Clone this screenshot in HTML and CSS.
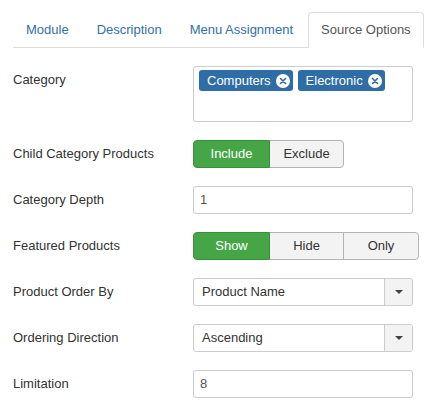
FILE: index.html
```html
<!DOCTYPE html>
<html>
<head>
<meta charset="utf-8">
<link rel="stylesheet" href="styles.css">
</head>
<body>
<div class="page">
  <ul class="tabs">
    <li><a>Module</a></li>
    <li><a>Description</a></li>
    <li><a>Menu Assignment</a></li>
    <li class="active"><a>Source Options</a></li>
  </ul>
  <div class="form">
    <div class="row">
      <div class="label">Category</div>
      <div class="controls">
        <div class="tagbox">
          <span class="tag">Computers<span class="x"><svg width="14" height="14" viewBox="0 0 14 14"><circle cx="7" cy="7" r="7" fill="#fff"/><path d="M4.5 4.5L9.5 9.5M9.5 4.5L4.5 9.5" stroke="#2f6da6" stroke-width="1.6" stroke-linecap="round"/></svg></span></span>
          <span class="tag">Electronic<span class="x"><svg width="14" height="14" viewBox="0 0 14 14"><circle cx="7" cy="7" r="7" fill="#fff"/><path d="M4.5 4.5L9.5 9.5M9.5 4.5L4.5 9.5" stroke="#2f6da6" stroke-width="1.6" stroke-linecap="round"/></svg></span></span>
        </div>
      </div>
    </div>
    <div class="row">
      <div class="label">Child Category Products</div>
      <div class="controls">
        <div class="btn-group">
          <span class="btn on w76">Include</span>
          <span class="btn w74">Exclude</span>
        </div>
      </div>
    </div>
    <div class="row">
      <div class="label">Category Depth</div>
      <div class="controls"><div class="input">1</div></div>
    </div>
    <div class="row">
      <div class="label">Featured Products</div>
      <div class="controls">
        <div class="btn-group">
          <span class="btn on w76">Show</span>
          <span class="btn w74">Hide</span>
          <span class="btn w75">Only</span>
        </div>
      </div>
    </div>
    <div class="row">
      <div class="label">Product Order By</div>
      <div class="controls">
        <div class="select"><span class="val">Product Name</span><span class="arrow"><i class="caret"></i></span></div>
      </div>
    </div>
    <div class="row">
      <div class="label">Ordering Direction</div>
      <div class="controls">
        <div class="select"><span class="val">Ascending</span><span class="arrow"><i class="caret"></i></span></div>
      </div>
    </div>
    <div class="row">
      <div class="label">Limitation</div>
      <div class="controls"><div class="input">8</div></div>
    </div>
  </div>
</div>
</body>
</html>
```

FILE: styles.css
```css
html, body { margin: 0; padding: 0; background: #fff; overflow: hidden; }
body { font-family: "Liberation Sans", Arial, sans-serif; font-size: 13px; color: #333; }
.page { padding: 12px 0 0 13px; }
.tabs {
  list-style: none; margin: 0 0 18px 0; padding: 0;
  display: flex; border-bottom: 1px solid #ddd; width: 420px;
}
.tabs li { margin-bottom: -1px; flex: none; white-space: nowrap; }
.tabs a {
  display: block; padding: 8px 12px; line-height: 18px;
  border: 1px solid transparent; border-radius: 4px 4px 0 0;
  margin-right: 2px; color: #3071a9;
}
.tabs .active a {
  color: #555; background: #fff;
  border-color: #ddd #ddd transparent #ddd;
}
.row { display: flex; margin-bottom: 18px; }
.label { width: 180px; padding-top: 5px; line-height: 18px; flex: none; }
.controls { flex: none; }
.tagbox {
  box-sizing: border-box; width: 220px; height: 56px;
  border: 1px solid #ccc; border-radius: 3px;
  padding: 3px 0 0 5px; display: flex; align-items: flex-start; gap: 5px;
}
.tag {
  display: inline-flex; align-items: center; height: 21px;
  background: #2f6da6; color: #fff; border-radius: 3px;
  padding: 0 3px 0 8px; line-height: 21px;
}
.tag .x { display: inline-flex; margin-left: 5px; }
.btn-group { display: flex; }
.btn {
  box-sizing: border-box; height: 28px; line-height: 26px; text-align: center;
  background: #f3f3f3; border: 1px solid #b3b3b3; color: #333;
  margin-left: -1px;
}
.btn:first-child { margin-left: 0; border-radius: 4px 0 0 4px; }
.btn:last-child { border-radius: 0 4px 4px 0; }
.btn.on { background: #46a546; border-color: #3b8f3b; color: #fff; position: relative; }
.w76 { width: 77px; }
.w74 { width: 75px; }
.w75 { width: 76px; }
.input {
  box-sizing: border-box; width: 220px; height: 28px; line-height: 26px;
  border: 1px solid #ccc; border-radius: 3px; padding: 0 6px; color: #555;
}
.select {
  box-sizing: border-box; width: 220px; height: 28px;
  border: 1px solid #ccc; border-radius: 3px; display: flex;
}
.select .val { flex: 1; line-height: 26px; padding-left: 8px; color: #333; }
.select .arrow {
  width: 27px; background: #f3f3f3; border-left: 1px solid #ccc;
  border-radius: 0 3px 3px 0;
  display: flex; align-items: center; justify-content: center;
}
.caret {
  width: 0; height: 0; border-left: 4px solid transparent; border-right: 4px solid transparent;
  border-top: 4px solid #444;
}
```
